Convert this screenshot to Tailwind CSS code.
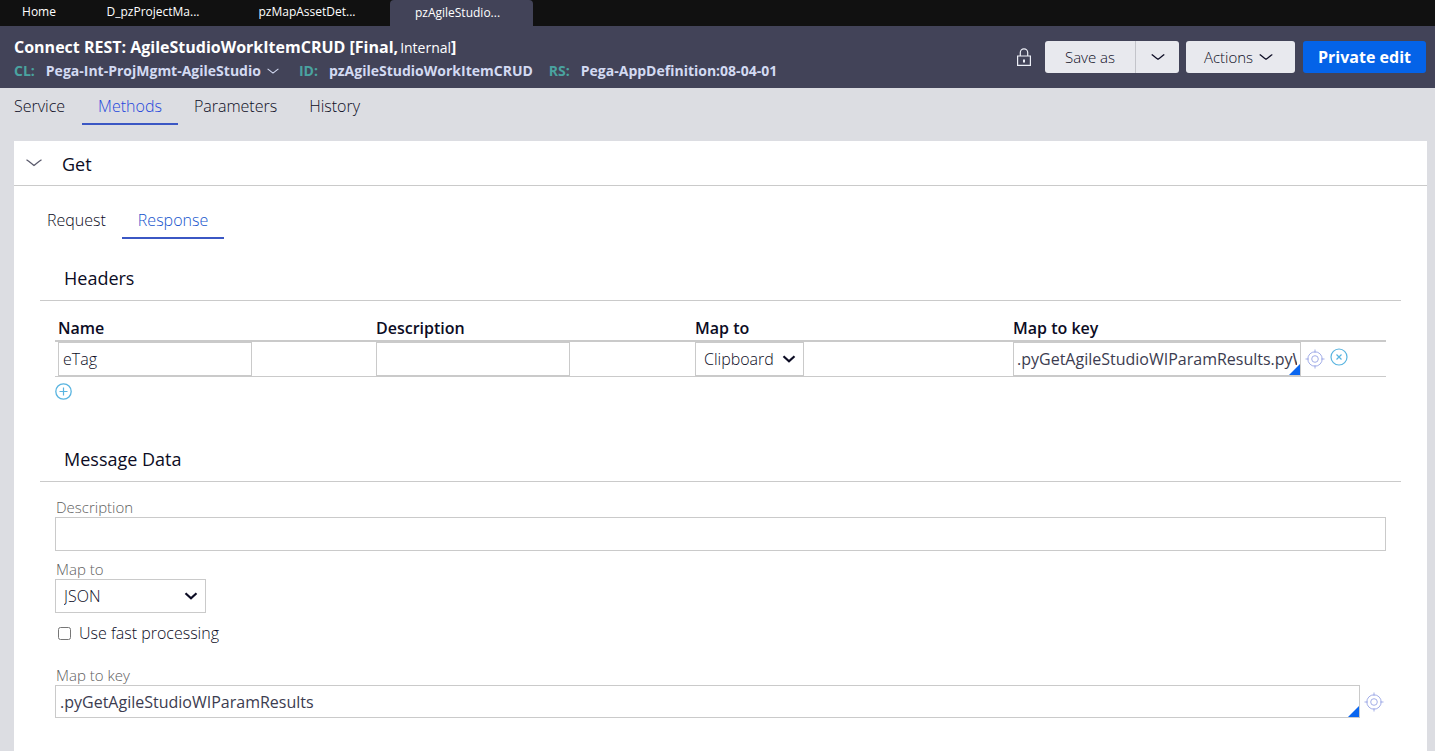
<!DOCTYPE html>
<html lang="en">
<head>
<meta charset="utf-8">
<meta name="viewport" content="width=device-width, initial-scale=1">
<title>Connect REST: AgileStudioWorkItemCRUD</title>
<script src="https://cdn.jsdelivr.net/npm/@tailwindcss/browser@4"></script>
</head>
<body class="flex h-screen flex-col overflow-hidden bg-[#dcdde2] font-['Open_Sans',sans-serif] text-base font-light text-[#0c0c24]">
<svg class="hidden" aria-hidden="true">
  <symbol id="target" viewBox="0 0 20 20"><g fill="none" stroke="#a3aee8"><circle cx="10" cy="10" r="7.2"/><circle cx="10" cy="10" r="3.3"/><path d="M10 .5v3.5M10 16v3.500M.5 10H4M16 10h3.500"/></g></symbol>
  <symbol id="chev" viewBox="0 0 14 8"><path d="M.7 1.500C3 3.200 5 5 7 6.300 9 5 11 3.200 13.300 1.500" fill="none" stroke="currentColor" stroke-width="1.300"/></symbol>
  <symbol id="bold-chev" viewBox="0 0 14 8"><path d="M1.500 1.200 7 6.300l5.500-5.100" fill="none" stroke="currentColor" stroke-width="2.200"/></symbol>
</svg>

<nav class="flex h-[26px] shrink-0 bg-[#111111] text-xs font-normal leading-6 text-white" aria-label="Open documents">
  <a href="#" class="w-[78px] text-center">Home</a>
  <a href="#" class="w-[150px] text-center">D_pzProjectMa...</a>
  <a href="#" class="w-[162px] pr-1 text-center">pzMapAssetDet...</a>
  <a href="#" class="w-[143px] rounded-t-sm bg-[#424358] pr-2 text-center leading-[26px]">pzAgileStudio...</a>
</nav>

<header class="flex h-[62px] shrink-0 items-center justify-between bg-[#424358] pl-3.5 pr-[9px]">
  <div class="pt-1">
    <h1 class="text-base font-bold leading-6 text-white">Connect REST: AgileStudioWorkItemCRUD [Final,<span class="pl-0.5 text-sm font-normal">Internal</span>]</h1>
    <div class="flex items-center text-sm font-bold leading-6 text-[#d3daf2]">
      <span class="text-[#4aa3a0]">CL:</span>
      <a href="#" class="ml-[11px] flex items-center gap-1.5">Pega-Int-ProjMgmt-AgileStudio<svg class="h-2 w-3"><use href="#chev"/></svg></a>
      <span class="ml-5 text-[#4aa3a0]">ID:</span><span class="ml-[11px]">pzAgileStudioWorkItemCRUD</span>
      <span class="ml-4 text-[#4aa3a0]">RS:</span><span class="ml-[11px]">Pega-AppDefinition:08-04-01</span>
    </div>
  </div>
  <div class="flex items-center text-[15px]">
    <svg class="mr-3.5 h-[18px] w-3.5" viewBox="0 0 14 18" fill="none" stroke="#eceef6" stroke-width="1.200"><path d="M.6 8h12.800v9.400H.6zM3.300 8V4.500a3.700 3.700 0 0 1 7.400 0V8"/><path d="M7 11.500v3" stroke-width="2"/></svg>
    <button class="h-8 w-[90px] rounded-l-[3px] bg-[#e8e9ee]">Save as</button>
    <button class="flex h-8 w-11 items-center justify-center rounded-r-[3px] border-l border-[#c3c4ca] bg-[#e8e9ee]" aria-label="More save options"><svg class="h-2 w-3.5"><use href="#chev"/></svg></button>
    <button class="ml-[7px] flex h-8 w-[109px] items-center justify-center gap-1.5 rounded-[3px] bg-[#e8e9ee] pr-1">Actions<svg class="h-2 w-3.5"><use href="#chev"/></svg></button>
    <button class="ml-2 h-8 w-[123px] rounded-[3px] bg-[#0463e8] text-base font-bold text-white">Private edit</button>
  </div>
</header>

<nav class="flex h-[37px] shrink-0 text-base leading-9" aria-label="Rule sections">
  <a href="#" class="pl-3.5 pr-[17px]">Service</a>
  <a href="#" class="border-b-2 border-[#3b57c4] px-4 text-[#2346dc]">Methods</a>
  <a href="#" class="px-4">Parameters</a>
  <a href="#" class="px-4">History</a>
</nav>

<main class="ml-3.5 mr-2 mt-4 flex-1 bg-white">
  <div class="flex h-[45px] items-center border-b border-[#cacaca] pl-3">
    <button aria-label="Collapse Get"><svg class="h-2 w-4 text-[#5a5a6c]" viewBox="0 0 16 8"><path d="M.5.800C3.500 2.600 6 5 8 6.400 10 5 12.500 2.600 15.500.800" fill="none" stroke="currentColor" stroke-width="1.300"/></svg></button>
    <h2 class="pl-5 pt-0.5 text-lg font-medium">Get</h2>
  </div>

  <div class="pl-[26px] pr-[26px]">
    <nav class="mt-4 flex text-base leading-9" aria-label="Get message">
      <a href="#" class="h-[37px] pl-[7px] pr-4">Request</a>
      <a href="#" class="h-[37px] border-b-2 border-[#3b57c4] px-4 text-[#1453cc]">Response</a>
    </nav>

    <section>
      <h3 class="mt-[21px] border-b border-[#cacaca] pb-1 pl-6 text-lg font-medium leading-9">Headers</h3>
      <div class="pl-[15px] pr-[15px] pt-3.5">
        <table class="w-full table-fixed border-collapse text-left">
          <colgroup><col class="w-[318px]"><col class="w-[319px]"><col class="w-[318px]"><col></colgroup>
          <thead>
            <tr class="h-[26px] border-b-2 border-[#cacaca]">
              <th class="px-[3px] py-0 font-semibold" id="c1">Name</th>
              <th class="px-[3px] py-0 font-semibold" id="c2">Description</th>
              <th class="px-[3px] py-0 font-semibold" id="c3">Map to</th>
              <th class="px-[3px] py-0 font-semibold" id="c4">Map to key</th>
            </tr>
          </thead>
          <tbody>
            <tr class="border-b border-[#cacaca]">
              <td class="px-[3px] py-0"><input aria-labelledby="c1" value="eTag" class="block h-[34px] w-[194px] border border-[#cacaca] px-1"></td>
              <td class="px-[3px] py-0"><input aria-labelledby="c2" class="block h-[34px] w-[194px] border border-[#cacaca] px-1"></td>
              <td class="px-[3px] py-0">
                <div class="grid w-[109px] items-center">
                  <select aria-labelledby="c3" class="col-start-1 row-start-1 h-[34px] w-full appearance-none border border-[#cacaca] bg-white px-2"><option>Clipboard</option></select>
                  <svg class="pointer-events-none col-start-1 row-start-1 mr-2 h-2 w-3.5 justify-self-end"><use href="#bold-chev"/></svg>
                </div>
              </td>
              <td class="px-[3px] py-0">
                <div class="flex items-center">
                  <div class="relative">
                    <input aria-labelledby="c4" value=".pyGetAgileStudioWIParamResults.pyWorkItem" class="block h-[34px] w-72 border border-[#cacaca] pl-[3px] pr-[3px] font-normal text-[#3c3c50]">
                    <svg class="absolute bottom-px right-px size-[11px]" viewBox="0 0 11 11"><path d="M11 0v11H0z" fill="#0a66f0"/></svg>
                  </div>
                  <button class="ml-1" aria-label="Open target"><svg class="block size-5"><use href="#target"/></svg></button>
                  <button class="mb-1 ml-[5px]" aria-label="Delete row"><svg class="block size-[18px]" viewBox="0 0 18 18" fill="none" stroke="#58b4e0"><circle cx="9" cy="9" r="8" stroke-width="1.200"/><path d="M6.500 6.500l5 5M11.500 6.500l-5 5" stroke-width="1.200"/></svg></button>
                </div>
              </td>
            </tr>
          </tbody>
        </table>
        <button class="mt-1.5 block" aria-label="Add row"><svg class="block size-[17px]" viewBox="0 0 17 17" fill="none" stroke="#58b4e0"><circle cx="8.500" cy="8.500" r="7.700" stroke-width="1.300"/><path d="M8.500 4.500v8M4.500 8.500h8" stroke-width="1.200"/></svg></button>
      </div>
    </section>

    <section>
      <h3 class="mt-[41px] border-b border-[#cacaca] pb-1 pl-6 text-lg font-medium leading-9">Message Data</h3>
      <div class="px-[15px] pt-[15px]">
        <label for="desc" class="block pl-px text-[15px] leading-5 text-[#606060]">Description</label>
        <input id="desc" class="block h-[34px] w-full border border-[#cacaca] px-1">
        <label for="map" class="mt-2 block pl-px text-[15px] leading-5 text-[#606060]">Map to</label>
        <div class="grid w-[151px] items-center">
          <select id="map" class="col-start-1 row-start-1 h-[34px] w-full appearance-none border border-[#cacaca] bg-white px-2"><option>JSON</option></select>
          <svg class="pointer-events-none col-start-1 row-start-1 mr-2 h-2 w-3.5 justify-self-end"><use href="#bold-chev"/></svg>
        </div>
        <div class="mt-2 flex items-center gap-2 pl-[3px] leading-6">
          <input type="checkbox" id="fast" class="size-[13px]">
          <label for="fast">Use fast processing</label>
        </div>
        <label for="key" class="mt-5 block pl-px text-[15px] leading-5 text-[#606060]">Map to key</label>
        <div class="flex items-center gap-1 pr-0.5">
          <div class="relative flex-1">
            <input id="key" value=".pyGetAgileStudioWIParamResults" class="block h-[33px] w-full border border-[#cacaca] px-1 font-normal text-[#3c3c50]">
            <svg class="absolute bottom-px right-px size-[11px]" viewBox="0 0 11 11"><path d="M11 0v11H0z" fill="#0a66f0"/></svg>
          </div>
          <button aria-label="Open target"><svg class="block size-5"><use href="#target"/></svg></button>
        </div>
      </div>
    </section>
  </div>
</main>
</body>
</html>
